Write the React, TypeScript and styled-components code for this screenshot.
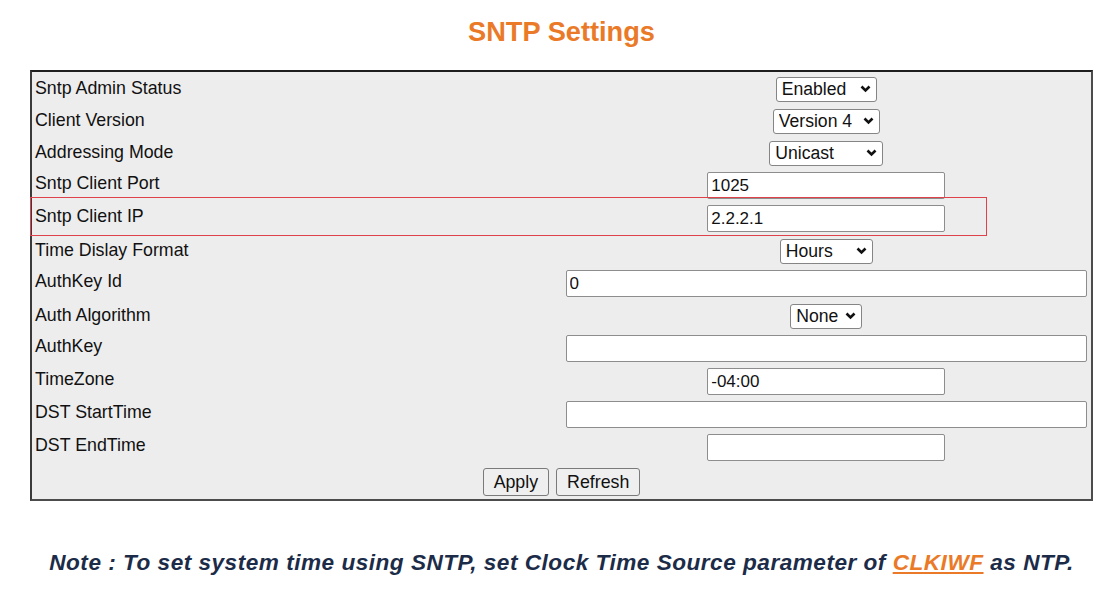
import React from "react";
import styled, { createGlobalStyle } from "styled-components";

const GlobalStyle = createGlobalStyle`
    html, body {
        margin: 0;
        padding: 0;
        background: #ffffff;
        font-family: "Liberation Sans", Arial, sans-serif;
    }
`;

const Page = styled.div`
    width: 1063px;
    margin-left: 30px;
    padding-top: 15px;
`;

const Title = styled.h1`
    margin: 0 0 21px;
    text-align: center;
    color: #ea7a28;
    font-size: 27.2px;
    font-weight: 700;
    line-height: 34px;
`;

const Panel = styled.div`
    background: #eeeded;
    border: 2px solid #4c4c4c;
    border-top-color: #1e1e1e;
    border-left-color: #3a3a3a;
    padding: 1px 0;
`;

const Row = styled.div<{ $compact?: boolean }>`
    position: relative;
    display: grid;
    grid-template-columns: 1fr 1fr;
    padding: ${({ $compact }) => ($compact ? "3.5px 0" : "3px 0")};
`;

const Label = styled.div`
    align-self: start;
    padding: 1px 3px 0;
    color: #111;
    font-size: 17.8px;
    line-height: 20px;
`;

const Value = styled.div`
    display: flex;
    justify-content: center;
    padding: 0 4px;
`;

const Highlight = styled.div`
    position: absolute;
    left: -2px;
    top: -5px;
    bottom: -1px;
    right: 104px;
    border: 1px solid #e0424b;
    pointer-events: none;
`;

const TextInput = styled.input<{ $wide?: boolean }>`
    box-sizing: border-box;
    width: ${({ $wide }) => ($wide ? "100%" : "238px")};
    height: 27px;
    margin: 0;
    padding: 0 3px;
    border: 1px solid #8d8d8d;
    border-radius: 2px;
    background: #fff;
    color: #111;
    font-family: inherit;
    font-size: 17px;
    outline: none;
`;

const SelectWrap = styled.span`
    position: relative;
    display: inline-block;
`;

const Select = styled.select`
    box-sizing: border-box;
    height: 25px;
    margin: 0;
    padding: 0 20px 0 5px;
    appearance: none;
    -webkit-appearance: none;
    border: 1px solid #858585;
    border-radius: 3px;
    background: #fff;
    color: #111;
    font-family: inherit;
    font-size: 17.6px;
    line-height: 23px;
    outline: none;
`;

const Chevron = styled.svg`
    position: absolute;
    right: 6px;
    top: 8px;
    width: 11px;
    height: 8px;
    pointer-events: none;
`;

const Buttons = styled.div`
    display: flex;
    justify-content: center;
    gap: 7px;
    padding: 4px 0 2px;
`;

const Button = styled.button`
    height: 28px;
    padding: 0 10px;
    border: 1px solid #7a7a7a;
    border-radius: 3px;
    background: #efefef;
    color: #111;
    font-family: inherit;
    font-size: 17.8px;
`;

const Note = styled.p`
    margin: 49px 0 0;
    text-align: center;
    color: #1c2c48;
    font-size: 22.6px;
    font-weight: 700;
    font-style: italic;
    letter-spacing: 0.5px;
    white-space: nowrap;
`;

const NoteLink = styled.a`
    color: #ea7a28;
    text-decoration: underline;
`;

type Field = {
    label: string;
    value: string;
    options?: string[];
    width?: number;
    wide?: boolean;
    highlight?: boolean;
};

const fields: Field[] = [
    { label: "Sntp Admin Status", value: "Enabled", options: ["Enabled", "Disabled"], width: 101 },
    { label: "Client Version", value: "Version 4", options: ["Version 3", "Version 4"], width: 107 },
    { label: "Addressing Mode", value: "Unicast", options: ["Unicast", "Broadcast", "Multicast"], width: 114 },
    { label: "Sntp Client Port", value: "1025" },
    { label: "Sntp Client IP", value: "2.2.2.1", highlight: true },
    { label: "Time Dislay Format", value: "Hours", options: ["Hours", "AM/PM"], width: 93 },
    { label: "AuthKey Id", value: "0", wide: true },
    { label: "Auth Algorithm", value: "None", options: ["None", "MD5"], width: 72 },
    { label: "AuthKey", value: "", wide: true },
    { label: "TimeZone", value: "-04:00" },
    { label: "DST StartTime", value: "", wide: true },
    { label: "DST EndTime", value: "" },
];

function Dropdown({ field }: { field: Field }) {
    return (
        <SelectWrap>
            <Select defaultValue={field.value} style={{ width: field.width }}>
                {field.options!.map((o) => (
                    <option key={o}>{o}</option>
                ))}
            </Select>
            <Chevron viewBox="0 0 11 8">
                <path d="M1.5 1.5 L5.5 5.5 L9.5 1.5" fill="none" stroke="#111" strokeWidth="2.6" />
            </Chevron>
        </SelectWrap>
    );
}

export default function App() {
    return (
        <>
            <GlobalStyle />
            <Page>
                <Title>SNTP Settings</Title>
                <Panel>
                    {fields.map((f) => (
                        <Row key={f.label} $compact={!!f.options}>
                            <Label>{f.label}</Label>
                            <Value>
                                {f.options ? (
                                    <Dropdown field={f} />
                                ) : (
                                    <TextInput defaultValue={f.value} $wide={f.wide} />
                                )}
                            </Value>
                            {f.highlight ? <Highlight /> : null}
                        </Row>
                    ))}
                    <Buttons>
                        <Button>Apply</Button>
                        <Button>Refresh</Button>
                    </Buttons>
                </Panel>
                <Note>
                    Note : To set system time using SNTP, set Clock Time Source parameter of{" "}
                    <NoteLink href="#">CLKIWF</NoteLink> as NTP.
                </Note>
            </Page>
        </>
    );
}
